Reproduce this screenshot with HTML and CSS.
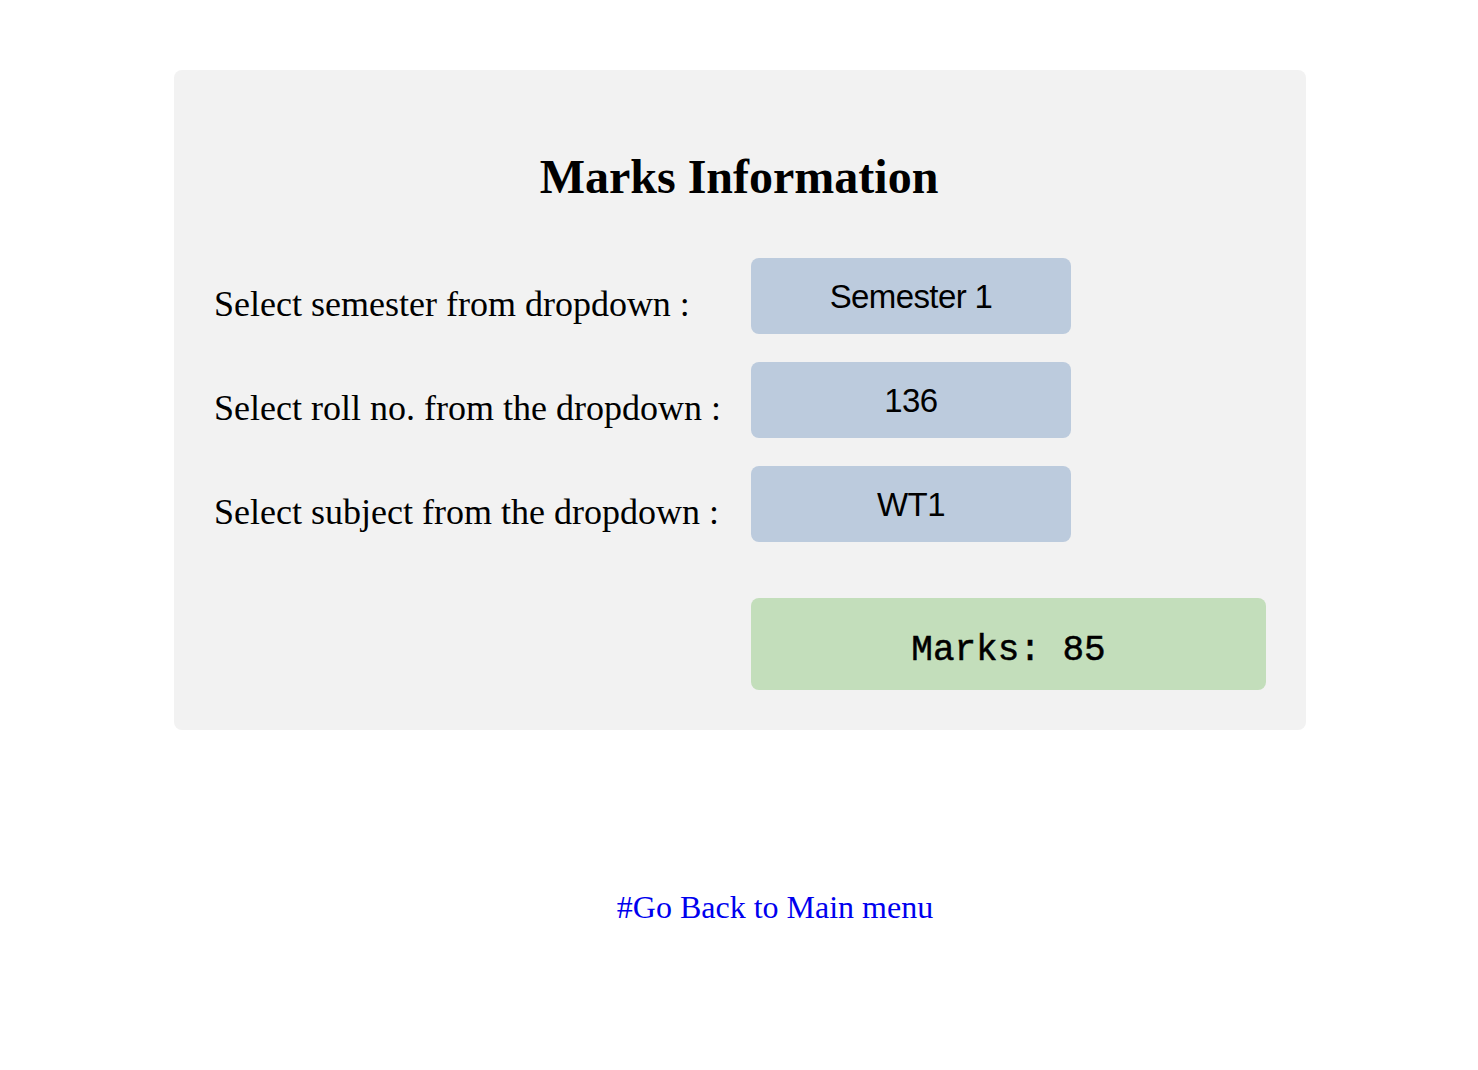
FILE: index.html
```html
<!DOCTYPE html>
<html lang="en">
<head>
<meta charset="utf-8">
<title>Marks Information</title>
<link rel="stylesheet" href="styles.css">
</head>
<body>
<main class="page">
  <section class="card">
    <h1 class="title">Marks Information</h1>
    <form class="form">
      <label class="label" for="sem">Select semester from dropdown :</label>
      <select class="dropdown" id="sem"><option>Semester 1</option></select>

      <label class="label" for="roll">Select roll no. from the dropdown :</label>
      <select class="dropdown" id="roll"><option>136</option></select>

      <label class="label" for="sub">Select subject from the dropdown :</label>
      <select class="dropdown" id="sub"><option>WT1</option></select>

      <div class="result">Marks: 85</div>
    </form>
  </section>
  <p class="back"><a class="back-link" href="#">#Go Back to Main menu</a></p>
</main>
</body>
</html>
```
FILE: styles.css
```css
html, body {
  margin: 0;
  padding: 0;
  background: #ffffff;
}

body {
  font-family: "Liberation Serif", "Times New Roman", serif;
  color: #000;
}

.page {
  padding: 70px 7px 0 9px;
}

.card {
  width: 1132px;
  box-sizing: border-box;
  margin: 0 auto;
  background: #f2f2f2;
  border-radius: 8px;
  padding: 79px 42px 40px 40px;
}

.title {
  margin: 0;
  font-size: 48px;
  line-height: 56px;
  font-weight: bold;
  text-align: center;
}

.form {
  margin-top: 53px;
  display: grid;
  grid-template-columns: 537px 1fr;
  grid-template-rows: 76px 76px 76px auto;
  row-gap: 28px;
}

.label {
  font-size: 36px;
  line-height: 60px;
  padding-top: 16px;
  white-space: nowrap;
}

.dropdown {
  -webkit-appearance: none;
  appearance: none;
  width: 320px;
  height: 76px;
  margin: 0;
  border: none;
  border-radius: 8px;
  background: #bccbdd;
  color: #000;
  font-family: "Liberation Sans", Arial, sans-serif;
  font-size: 33px;
  letter-spacing: -0.6px;
  text-align: center;
  text-align-last: center;
  padding: 0;
}

.result {
  grid-column: 2;
  width: 515px;
  margin-top: 28px;
  height: 92px;
  box-sizing: border-box;
  padding-top: 14px;
  line-height: 78px;
  background: #c3debb;
  border-radius: 8px;
  font-family: "Liberation Mono", "Courier New", monospace;
  font-size: 36px;
  text-align: center;
  -webkit-text-stroke: 0.5px #000;
}

.back {
  margin: 157px 0 0;
  padding-left: 70px;
  text-align: center;
  font-size: 32px;
  line-height: 40px;
}

.back-link {
  color: #0000ee;
  text-decoration: none;
}
```
